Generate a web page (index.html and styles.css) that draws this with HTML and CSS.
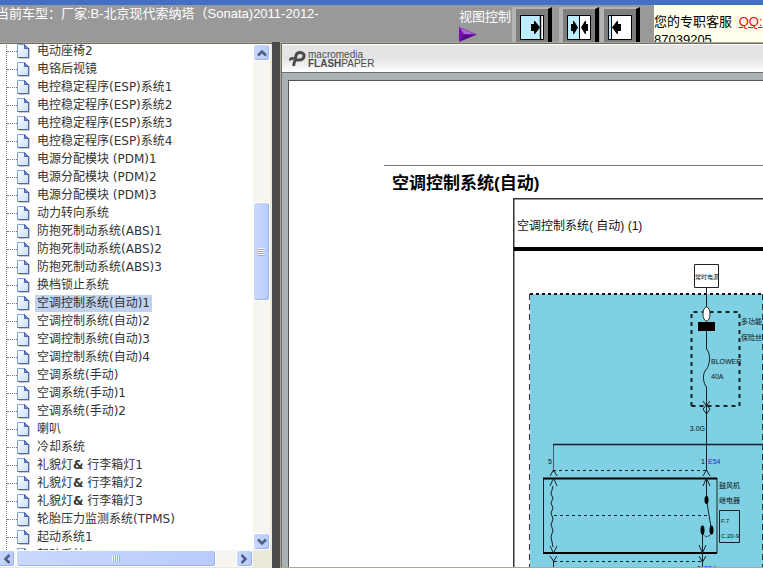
FILE: index.html
```
<!DOCTYPE html>
<html lang="zh-CN">
<head>
<meta charset="utf-8">
<title>电路图 - 空调控制系统</title>
<link rel="stylesheet" href="styles.css">
</head>
<body>
<svg class="defs" width="0" height="0" aria-hidden="true">
  <defs>
    <linearGradient id="paper" x1="0" y1="0" x2="1" y2="1">
      <stop offset="0" stop-color="#ffffff"/><stop offset="1" stop-color="#c4dcfa"/>
    </linearGradient>
    <symbol id="doc" viewBox="0 0 13 16">
      <path d="M2 15.5h10.5V5" fill="none" stroke="#c9c9cf"/>
      <path d="M.5 1.5h7l4 4v9H.5z" fill="url(#paper)" stroke="#7fa3d6"/>
      <path d="M11.5 5v9.5H1" fill="none" stroke="#52689e"/>
      <path d="M7.5 1.5v4h4z" fill="#6f8fce" stroke="#4a66a8"/>
    </symbol>
    <symbol id="chevron" viewBox="0 0 10 10">
      <path d="M1 7.500L5 3.500 9 7.500" fill="none" stroke="#4d6185" stroke-width="2.600"/>
    </symbol>
  </defs>
</svg>
<header class="topbar">
  <p class="model">当前车型：厂家:B-北京现代索纳塔（Sonata)2011-2012-</p>
  <div class="view">
    <span>视图控制</span>
    <svg width="19" height="15" viewBox="0 0 19 15" aria-hidden="true">
      <path d="M0 0l18 7.500L0 15z" fill="#7410b0"/><path d="M1 1l16 6.500L5 7z" fill="#b06ad8"/><path d="M1 14l16-6.500L5 8z" fill="#540888"/>
    </svg>
  </div>
  <div class="modes">
    <button class="mode" type="button" aria-label="展开左侧">
      <svg width="24" height="25" viewBox="0 0 24 25"><path d="M.5.5h23v24H.5z" fill="#fff" stroke="#000"/><path d="M1 1h19v23H1z" fill="#bdecfd"/><path d="M20.500 1v23" stroke="#000" stroke-width="1.500"/><path d="M11 9h3V6h1l5 6.500-5 6.500h-1v-3h-3z"/></svg>
    </button>
    <button class="mode mode-split" type="button" aria-label="左右并排">
      <svg width="24" height="25" viewBox="0 0 24 25"><path d="M.5.5h23v24H.5z" fill="#fff" stroke="#000"/><path d="M1 1h11v23H1z" fill="#bdecfd"/><path d="M12.500 1v23" stroke="#000"/><path d="M4 9h2V6h1l4 6.500L7 19H6v-3H4zM21 9h-2V6h-1l-4 6.500 4 6.500h1v-3h2z"/></svg>
    </button>
    <button class="mode" type="button" aria-label="展开右侧">
      <svg width="24" height="25" viewBox="0 0 24 25"><path d="M.5.5h23v24H.5z" fill="#fff" stroke="#000"/><path d="M1 1h2v23H1z" fill="#bdecfd"/><path d="M3.500 1v23" stroke="#000"/><path d="M13 9h-3V6H9l-5 6.500L9 19h1v-3h3z"/></svg>
    </button>
  </div>
  <div class="service">您的专职客服 <a href="#qq">QQ:</a><br>87039205</div>
</header>
<main class="frames">
  <nav class="side" aria-label="系统目录">
    <div class="tree">
      <ul>
        <li><svg><use href="#doc"/></svg><a href="#1">电动座椅2</a></li>
        <li><svg><use href="#doc"/></svg><a href="#2">电铬后视镜</a></li>
        <li><svg><use href="#doc"/></svg><a href="#3">电控稳定程序(ESP)系统1</a></li>
        <li><svg><use href="#doc"/></svg><a href="#4">电控稳定程序(ESP)系统2</a></li>
        <li><svg><use href="#doc"/></svg><a href="#5">电控稳定程序(ESP)系统3</a></li>
        <li><svg><use href="#doc"/></svg><a href="#6">电控稳定程序(ESP)系统4</a></li>
        <li><svg><use href="#doc"/></svg><a href="#7">电源分配模块 (PDM)1</a></li>
        <li><svg><use href="#doc"/></svg><a href="#8">电源分配模块 (PDM)2</a></li>
        <li><svg><use href="#doc"/></svg><a href="#9">电源分配模块 (PDM)3</a></li>
        <li><svg><use href="#doc"/></svg><a href="#10">动力转向系统</a></li>
        <li><svg><use href="#doc"/></svg><a href="#11">防抱死制动系统(ABS)1</a></li>
        <li><svg><use href="#doc"/></svg><a href="#12">防抱死制动系统(ABS)2</a></li>
        <li><svg><use href="#doc"/></svg><a href="#13">防抱死制动系统(ABS)3</a></li>
        <li><svg><use href="#doc"/></svg><a href="#14">换档锁止系统</a></li>
        <li><svg><use href="#doc"/></svg><a class="selected" href="#15">空调控制系统(自动)1</a></li>
        <li><svg><use href="#doc"/></svg><a href="#16">空调控制系统(自动)2</a></li>
        <li><svg><use href="#doc"/></svg><a href="#17">空调控制系统(自动)3</a></li>
        <li><svg><use href="#doc"/></svg><a href="#18">空调控制系统(自动)4</a></li>
        <li><svg><use href="#doc"/></svg><a href="#19">空调系统(手动)</a></li>
        <li><svg><use href="#doc"/></svg><a href="#20">空调系统(手动)1</a></li>
        <li><svg><use href="#doc"/></svg><a href="#21">空调系统(手动)2</a></li>
        <li><svg><use href="#doc"/></svg><a href="#22">喇叭</a></li>
        <li><svg><use href="#doc"/></svg><a href="#23">冷却系统</a></li>
        <li><svg><use href="#doc"/></svg><a href="#24">礼貌灯<b>&amp;</b> 行李箱灯1</a></li>
        <li><svg><use href="#doc"/></svg><a href="#25">礼貌灯<b>&amp;</b> 行李箱灯2</a></li>
        <li><svg><use href="#doc"/></svg><a href="#26">礼貌灯<b>&amp;</b> 行李箱灯3</a></li>
        <li><svg><use href="#doc"/></svg><a href="#27">轮胎压力监测系统(TPMS)</a></li>
        <li><svg><use href="#doc"/></svg><a href="#28">起动系统1</a></li>
        <li><svg><use href="#doc"/></svg><a href="#29">起动系统2</a></li>
      </ul>
    </div>
    <div class="vbar">
      <button class="arrow" type="button" aria-label="向上滚动"><svg><use href="#chevron"/></svg></button>
      <div class="vthumb"><i class="grip"></i></div>
      <button class="arrow down" type="button" aria-label="向下滚动"><svg><use href="#chevron"/></svg></button>
    </div>
    <div class="hbar">
      <button class="arrow left" type="button" aria-label="向左滚动"><svg><use href="#chevron"/></svg></button>
      <div class="hthumb"><i class="grip grip-h"></i></div>
      <button class="arrow right" type="button" aria-label="向右滚动"><svg><use href="#chevron"/></svg></button>
    </div>
  </nav>
  <div class="divider"></div>
  <section class="viewer">
    <div class="brand">
      <svg width="17" height="16" viewBox="0 0 17 16" aria-hidden="true">
        <path d="M4.500 15L7 4.500C7.500 2.500 9 1.500 11 1.500c3 0 4.500 2 4 4-.5 2.500-2 3.500-5 3.500H7" fill="none" stroke="#4c4c4c" stroke-width="3"/>
        <path d="M0 8.500C0 7 1 6 3 6h2l-.7 3H3c-1 0-1.500.5-2 1.500z" fill="#4c4c4c"/>
      </svg>
      <div class="wordmark">macromedia<br><b>FLASH</b>PAPER</div>
    </div>
    <div class="desk">
      <article class="sheet">
        <div class="rule"></div>
        <h1>空调控制系统(自动)</h1>
        <svg class="diagram" width="300" height="400" viewBox="513 198 300 400" role="img" aria-label="空调控制系统(自动)(1) 电路图">
          <path d="M513.500 598V198.500H813" fill="none" stroke="#333" stroke-width="2"/>
          <text class="heading" x="517" y="230">空调控制系统( 自动) (1)</text>
          <path d="M514 249h299" stroke="#000" stroke-width="4"/>
          <path d="M530 294h283v304H530z" fill="#7ed0e2"/>
          <path d="M530 294h283" stroke="#111" stroke-width="2" stroke-dasharray="3 3"/>
          <path d="M529.500 294v304M762.500 294v304" stroke="#333" stroke-dasharray="6 4"/>
          <path d="M694.500 264.500h24v23h-24z" fill="#fff" stroke="#222"/>
          <text class="tiny" x="695" y="279">常时电源</text>
          <g fill="none" stroke="#182226">
            <path d="M706.500 288v61c5 5 3 17 0 20-5 5-3 15 0 18v84"/>
            <path d="M691.500 406V312h48v94h-48" stroke-width="2" stroke-dasharray="4 4"/>
            <path d="M703 401l3.500 5 3.500-5M703 409l3.500 5 3.500-5-3.500-4z"/>
            <path d="M553.500 472v-28" stroke="#557"/>
            <path d="M553 444.500h260" stroke-width="1.500"/>
            <path d="M553 470.500h153M554 515.500h155M554 561.500h148" stroke-dasharray="3 3"/>
            <path d="M543.500 478v75M717 478v75"/>
            <path d="M543 478.500h174M543 553h174" stroke="#000" stroke-width="2"/>
            <path d="M550 476l3.500-6 3.500 6M550 486l3.500-8 3.500 8M553 486l-2 8 2 4-2 5 2 5-2 5 2 6-2 6 2 5-2 7 2 10M550 546l3.500 7 3.500-7M550 556l3.500 5 3.500-5M553.500 561v10"/>
            <path d="M703 476l3.500-6 3.500 6M703 486l3.500-8 3.500 8M706.500 479v21l5 30M702.500 530v38M699 545l3.500 8 3.500-8M699 556l3.500 6 3.500-6"/>
            <path d="M703 534c3 4 6 3 9-1" stroke-dasharray="2 1"/>
          </g>
          <ellipse cx="706.500" cy="314" rx="3.500" ry="7" fill="#fff" stroke="#333"/>
          <path d="M698 322h17v9h-17z"/>
          <ellipse cx="706.500" cy="500" rx="2" ry="4"/>
          <ellipse cx="702.500" cy="530" rx="2" ry="4.500"/>
          <ellipse cx="711.500" cy="530" rx="2" ry="4.500"/>
          <text class="cjk" x="741" y="324">多功能</text>
          <text class="cjk" x="741" y="340">保险丝</text>
          <text class="label" x="711" y="364">BLOWER</text>
          <text class="label" x="711" y="379">40A</text>
          <text class="label end" x="705" y="431">3.0G</text>
          <text class="label end" x="705" y="464">1</text>
          <text class="label blue" x="708" y="464">E54</text>
          <text class="label end" x="552" y="464">5</text>
          <text class="cjk" x="719" y="488">鼓风机</text>
          <text class="cjk" x="719" y="503">继电器</text>
          <path d="M719.500 510.500h20v32h-20z" fill="none" stroke="#182226"/>
          <text class="tiny" x="721" y="523">F.7</text>
          <text class="tiny" x="721" y="538">C.20-9</text>
          <text class="label end" x="701" y="571">2</text>
          <text class="label blue" x="704" y="571">E54</text>
        </svg>
      </article>
    </div>
  </section>
</main>
</body>
</html>
```
FILE: styles.css
```
* { box-sizing: border-box; }

body {
  margin: 0;
  height: 100vh;
  display: flex;
  flex-direction: column;
  overflow: hidden;
  background: #ece9d8;
  font-family: "Liberation Sans", "Noto Sans CJK SC", sans-serif;
  font-size: 13px;
}

button { padding: 0; border: 0; font: inherit; }
.defs { position: absolute; }

/* Top bar */
.topbar {
  display: flex;
  flex: none;
  height: 42px;
  border-top: 5px solid #4470c4;
  background: #999;
  color: #fff;
  overflow: hidden;
}
.model {
  flex: 1;
  margin: 0 0 0 -4px;
  line-height: 18px;
  white-space: nowrap;
}
.view {
  display: flex;
  flex-direction: column;
  width: 53px;
  padding-top: 2px;
  line-height: 20px;
  white-space: nowrap;
}
.view svg { display: block; }
.modes { display: flex; padding-top: 2px; width: 142px; }
.mode {
  display: flex;
  align-items: flex-start;
  justify-content: center;
  flex: none;
  width: 40px;
  height: 40px;
  padding-top: 6px;
  border: solid #b4b4b4;
  border-width: 2px 4px 0 4px;
  border-right-color: #000;
  background: #7e7e7e;
}
.mode-split { margin: 0 1px 0 7px; }
.service {
  width: 109px;
  padding-top: 8px;
  background: #ffffec;
  color: #000;
  line-height: 18px;
  white-space: nowrap;
}
.service a { margin-left: 3px; color: #f00; }

/* Frames */
.frames {
  flex: 1;
  display: flex;
  min-height: 0;
}
.side {
  flex: none;
  width: 272px;
  display: grid;
  grid-template: minmax(0, 1fr) 17px / minmax(0, 1fr) 17px;
  border-top: 1px solid #aca899;
  box-shadow: inset 0 1px #716f64;
  padding: 1px 2px 1px 0;
}
.tree { overflow: hidden; background: #fff; }
.tree ul {
  margin: -2px 0 0 6px;
  padding: 0;
  list-style: none;
  border-left: 1px dotted #777;
}
.tree li {
  display: flex;
  align-items: center;
  height: 18px;
  white-space: nowrap;
}
.tree li::before {
  content: "";
  width: 10px;
  border-top: 1px dotted #777;
}
.tree li svg { width: 13px; height: 16px; margin-right: 5px; }
.tree a {
  padding: 0 2px;
  color: #333;
  font-family: "DejaVu Sans", "Noto Sans CJK SC", sans-serif;
  font-size: 12px;
  line-height: 17px;
  text-decoration: none;
}
.tree .selected { background: #c1d2ee; }

/* Scroll bars */
.vbar, .hbar { display: grid; background: #f6f5f0; }
.vbar { grid-template-rows: 17px 141fr 99fr 232fr 17px; }
.hbar { grid-template-columns: 17px 1fr 199fr 20fr 17px; margin-left: -2px; }
.arrow, .vthumb, .hthumb {
  display: flex;
  align-items: center;
  justify-content: center;
  border: 1px solid #fff;
  border-radius: 3px;
  background: linear-gradient(to right, #cad8fd, #b8cbfa);
  box-shadow: inset -1px -1px #98b2ec;
}
.arrow { width: 17px; height: 17px; }
.arrow svg { width: 10px; height: 10px; }
.down svg { transform: rotate(180deg); }
.left svg { transform: rotate(-90deg); }
.right svg { transform: rotate(90deg); }
.vthumb { grid-row: 3; }
.down { grid-row: 5; }
.hthumb { grid-column: 3; }
.right { grid-column: 5; }
.grip {
  width: 7px;
  height: 8px;
  background: repeating-linear-gradient(#eef4fe 0 1px, #8cb0f8 1px 2px);
}
.grip-h {
  width: 8px;
  height: 7px;
  background: repeating-linear-gradient(to right, #eef4fe 0 1px, #8cb0f8 1px 2px);
}

/* Document viewer */
.divider { flex: none; width: 8px; background: #4a4a4a; }
.viewer {
  flex: 1;
  min-width: 0;
  display: flex;
  flex-direction: column;
  border: solid #aca899;
  border-width: 1px 0 1px 1px;
  box-shadow: inset 1px 1px #716f64;
  padding: 1px 0 0 1px;
}
.brand {
  flex: none;
  display: flex;
  align-items: center;
  gap: 2px;
  height: 29px;
  padding-left: 7px;
  border-top: 1px solid #fff;
  border-bottom: 1px solid #6c6c6c;
  background: linear-gradient(#e4e4e4 50%, #fff);
}
.wordmark { color: #4c4c4c; font-size: 10px; line-height: 9px; }
.desk {
  flex: 1;
  min-height: 0;
  padding: 7px 0 0 6px;
  background: #a9b3b4;
  overflow: hidden;
}
.sheet {
  height: 100%;
  min-height: 500px;
  padding: 84px 0 0 95px;
  border: solid #555;
  border-width: 1px 0 0 1px;
  background: #fff;
}
.rule { border-top: 1px solid #777; }
.sheet h1 {
  margin: 6px 0 2px 8px;
  color: #000;
  font-size: 17px;
  line-height: 24px;
}
.diagram { display: block; margin-left: 129px; }
.diagram text {
  fill: #111;
  font-family: "Liberation Sans Narrow", "Liberation Sans", "Noto Sans CJK SC", sans-serif;
}
.diagram .heading { font-size: 12px; }
.diagram .cjk, .diagram .label { font-size: 7px; }
.diagram .tiny { font-size: 6px; }
.diagram .end { text-anchor: end; }
.diagram .blue { fill: #1530c8; }
```
